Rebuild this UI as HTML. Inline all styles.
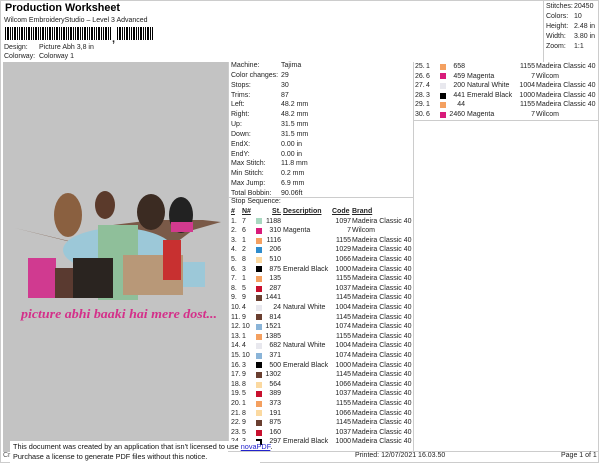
<!DOCTYPE html>
<html><head><style>
*{margin:0;padding:0;box-sizing:border-box}
body{width:600px;height:464px;background:#fff;font-family:"Liberation Sans",sans-serif;font-size:7px;color:#222;position:relative;overflow:hidden}
.a{position:absolute;white-space:nowrap}
.row{position:absolute;left:0;height:9.6px;line-height:9.6px;white-space:nowrap}
.row span{position:absolute}
.sw{position:absolute;width:6px;height:6px;top:1.8px}
u{text-decoration:underline}
</style></head><body>
<div class="a" style="left:5px;top:2px;font-size:10.8px;font-weight:bold;color:#000">Production Worksheet</div>
<div class="a" style="left:4px;top:17px;font-size:7px">Wilcom EmbroideryStudio – Level 3 Advanced</div>
<div class="a" style="left:5px;top:27px;width:148px;height:13px;background:repeating-linear-gradient(90deg,#000 0 1px,#fff 1px 2px,#000 2px 4px,#fff 4px 5px,#000 5px 6px,#fff 6px 7px)"></div>
<div class="a" style="left:111px;top:27px;width:6px;height:16px;background:#fff"></div>
<div class="a" style="left:112px;top:33px;font-size:11px;font-weight:bold">,</div>
<div class="a" style="left:4px;top:44px">Design:</div><div class="a" style="left:39px;top:44px">Picture Abh 3,8 in</div>
<div class="a" style="left:4px;top:53px">Colorway:</div><div class="a" style="left:39px;top:53px">Colorway 1</div>
<div class="a" style="left:0;top:0;width:599px;height:463px;border:1px solid #ccc"></div>
<div class="a" style="left:543px;top:0;width:56px;height:62px;border-left:1px solid #ccc"></div>
<div class="a" style="left:546px;top:2px;line-height:10px">Stitches:<br>Colors:<br>Height:<br>Width:<br>Zoom:</div>
<div class="a" style="left:574px;top:2px;line-height:10px">20450<br>10<br>2.48 in<br>3.80 in<br>1:1</div>
<!-- image panel -->
<div class="a" style="left:3px;top:62px;width:225px;height:390px;background:#c3c3c3"></div>
<svg class="a" style="left:3px;top:150px" width="225" height="240" viewBox="0 0 225 240">
<path d="M12 78 L70 92 L110 75 L150 70 L200 70 L218 72 L190 80 L150 110 L120 95 L80 95 Z" fill="#7a5a48"/>
<ellipse cx="115" cy="100" rx="55" ry="22" fill="#9cc8d8"/>
<rect x="95" y="75" width="40" height="75" fill="#8fbf9a"/>
<ellipse cx="102" cy="55" rx="10" ry="14" fill="#5b3a2b"/>
<ellipse cx="65" cy="65" rx="14" ry="22" fill="#8a6040"/>
<ellipse cx="148" cy="62" rx="14" ry="18" fill="#3b2b22"/>
<ellipse cx="178" cy="65" rx="12" ry="18" fill="#222"/>
<rect x="168" y="72" width="22" height="10" fill="#d23a8e"/>
<rect x="25" y="108" width="28" height="40" fill="#d03a90"/>
<rect x="52" y="118" width="18" height="30" fill="#5a3a30"/>
<rect x="70" y="108" width="40" height="40" fill="#2a2420"/>
<rect x="120" y="105" width="60" height="40" fill="#b89878"/>
<rect x="160" y="90" width="18" height="40" fill="#c83030"/>
<rect x="180" y="112" width="22" height="25" fill="#9cc8d8"/>
<text x="18" y="168" textLength="196" lengthAdjust="spacingAndGlyphs" font-family="Liberation Serif" font-style="italic" font-weight="bold" font-size="13" fill="#d4308a">picture abhi baaki hai mere dost...</text>
</svg>
<!-- middle -->
<div class="a" style="left:228px;top:62px;width:186px;height:390px;border-left:1px solid #ccc;border-right:1px solid #ccc"></div>
<div class="a" style="left:228px;top:197px;width:186px;border-top:1px solid #ccc"></div>
<div class="a" style="left:231px;top:61px;line-height:9.85px">Machine:<br>Color changes:<br>Stops:<br>Trims:<br>Left:<br>Right:<br>Up:<br>Down:<br>EndX:<br>EndY:<br>Max Stitch:<br>Min Stitch:<br>Max Jump:<br>Total Bobbin:</div>
<div class="a" style="left:281px;top:61px;line-height:9.85px">Tajima<br>29<br>30<br>87<br>48.2 mm<br>48.2 mm<br>31.5 mm<br>31.5 mm<br>0.00 in<br>0.00 in<br>11.8 mm<br>0.2 mm<br>6.9 mm<br>90.06ft</div>
<div class="a" style="left:231px;top:198px">Stop Sequence:</div>
<div id="t1" class="a" style="left:231px;top:207px;width:182px"></div>
<div id="t2" class="a" style="left:415px;top:62px;width:182px"></div>
<div class="a" style="left:414px;top:120px;width:185px;border-top:1px solid #ccc"></div>
<!-- notice -->
<div class="a" style="left:10px;top:441px;width:250px;height:23px;background:#fff"></div>
<div class="a" style="left:13px;top:442px;line-height:10px;font-size:7.3px;color:#111">This document was created by an application that isn't licensed to use <u style="color:#22c">novaPDF</u>.<br>Purchase a license to generate PDF files without this notice.</div>
<div class="a" style="left:3px;top:452px;color:#555">Cr</div>
<div class="a" style="left:228px;top:451px;width:371px;border-top:1px solid #ccc"></div>
<div class="a" style="left:355px;top:452px">Printed: 12/07/2021 16.03.50</div>
<div class="a" style="left:561px;top:452px">Page 1 of 1</div>
<script>
var C={a:'#a8d8c0',m:'#d81b7a',o:'#f4a060',b:'#2f8ccc',y:'#fbd9a0',k:'#000',r:'#c8102e',n:'#6a3f30',w:'#e8e8ee',l:'#8ab4d8'};
var d=[[7,'a',1188,'',1097,'Madeira Classic 40'],[6,'m',310,'Magenta',7,'Wilcom'],[1,'o',1116,'',1155,'Madeira Classic 40'],[2,'b',206,'',1029,'Madeira Classic 40'],[8,'y',510,'',1066,'Madeira Classic 40'],[3,'k',875,'Emerald Black',1000,'Madeira Classic 40'],[1,'o',135,'',1155,'Madeira Classic 40'],[5,'r',287,'',1037,'Madeira Classic 40'],[9,'n',1441,'',1145,'Madeira Classic 40'],[4,'w',24,'Natural White',1004,'Madeira Classic 40'],[9,'n',814,'',1145,'Madeira Classic 40'],[10,'l',1521,'',1074,'Madeira Classic 40'],[1,'o',1385,'',1155,'Madeira Classic 40'],[4,'w',682,'Natural White',1004,'Madeira Classic 40'],[10,'l',371,'',1074,'Madeira Classic 40'],[3,'k',500,'Emerald Black',1000,'Madeira Classic 40'],[9,'n',1302,'',1145,'Madeira Classic 40'],[8,'y',564,'',1066,'Madeira Classic 40'],[5,'r',389,'',1037,'Madeira Classic 40'],[1,'o',373,'',1155,'Madeira Classic 40'],[8,'y',191,'',1066,'Madeira Classic 40'],[9,'n',875,'',1145,'Madeira Classic 40'],[5,'r',160,'',1037,'Madeira Classic 40'],[3,'k',297,'Emerald Black',1000,'Madeira Classic 40'],
[1,'o',658,'',1155,'Madeira Classic 40'],[6,'m',459,'Magenta',7,'Wilcom'],[4,'w',200,'Natural White',1004,'Madeira Classic 40'],[3,'k',441,'Emerald Black',1000,'Madeira Classic 40'],[1,'o',44,'',1155,'Madeira Classic 40'],[6,'m',2460,'Magenta',7,'Wilcom']];
function row(i,r,y){return '<div class="row" style="top:'+y+'px;width:182px"><span style="left:0">'+(i+1)+'.</span><span style="left:11px">'+r[0]+'</span><i class="sw" style="left:25px;background:'+C[r[1]]+'"></i><span style="right:132px">'+r[2]+'</span><span style="left:52px">'+r[3]+'</span><span style="right:62px">'+r[4]+'</span><span style="left:121px">'+r[5]+'</span></div>';}
var h='<div class="row" style="top:0;width:182px;font-weight:bold"><span style="left:0"><u>#</u></span><span style="left:11px"><u>N#</u></span><span style="right:132px"><u>St.</u></span><span style="left:52px"><u>Description</u></span><span style="left:101px"><u>Code</u></span><span style="left:121px"><u>Brand</u></span></div>';
for(var i=0;i<24;i++)h+=row(i,d[i],9.6*(i+1));
document.getElementById('t1').innerHTML=h;h='';
for(i=24;i<30;i++)h+=row(i,d[i],9.6*(i-24));
document.getElementById('t2').innerHTML=h;
</script>
</body></html>
